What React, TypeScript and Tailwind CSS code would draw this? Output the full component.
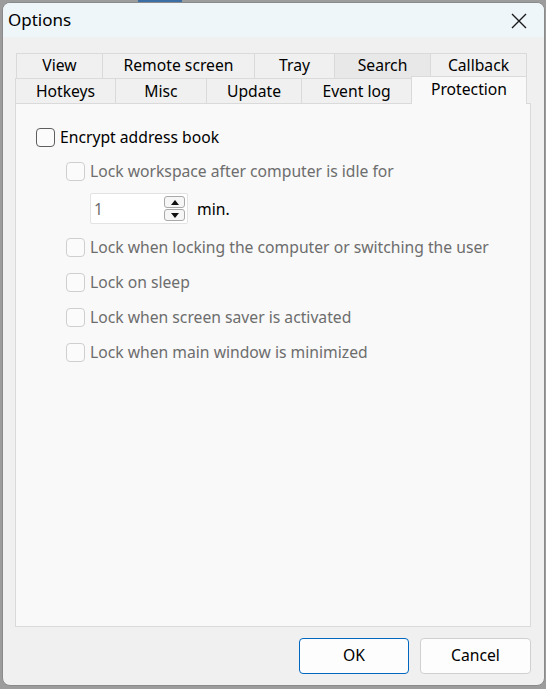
const font = { fontFamily: '"Noto Sans", "Open Sans", sans-serif' };

function Box({ dim }: { dim?: boolean }) {
  return (
    <span
      className={
        'inline-block w-[19px] h-[19px] rounded-[4px] border shrink-0 bg-[#fbfbfb] ' +
        (dim ? 'border-[#cfcfcf]' : 'border-[#5e5e5e]')
      }
    />
  );
}

export default function App() {
  const backTabs = [
    { label: 'View', w: 'w-[86px]' },
    { label: 'Remote screen', w: 'w-[152px]' },
    { label: 'Tray', w: 'w-[80px]' },
    { label: 'Search', w: 'w-[96px]', hover: true },
    { label: 'Callback', w: 'w-[97px]' },
  ];
  const frontTabs = [
    { label: 'Hotkeys', w: 'w-[100px]' },
    { label: 'Misc', w: 'w-[91px]' },
    { label: 'Update', w: 'w-[95px]' },
    { label: 'Event log', w: 'w-[110px]' },
  ];
  const locks = [
    'Lock when locking the computer or switching the user',
    'Lock on sleep',
    'Lock when screen saver is activated',
    'Lock when main window is minimized',
  ];

  return (
    <div className="w-[546px] h-[689px] bg-[#9c9c9c] relative overflow-hidden" style={font}>
      <div className="absolute left-[138px] top-0 w-[44px] h-[2px] bg-[#3a6ea5]" />
      <div className="absolute left-[2px] top-[2px] w-[543px] h-[684px] rounded-[8px] border border-[#8a8a8a] bg-[#f0f0f0] flex flex-col overflow-hidden">
        {/* title bar */}
        <div className="h-[34px] bg-[#eef6f9] flex items-center justify-between pl-[5px] pr-[17px] shrink-0">
          <span className="text-[17px] text-black">Options</span>
          <svg width="16" height="16" viewBox="0 0 16 16" className="mt-[1px]">
            <path d="M1 1 L15 15 M15 1 L1 15" stroke="#1a1a1a" strokeWidth="1.4" fill="none" />
          </svg>
        </div>

        <div className="flex-1 flex flex-col pl-[12px] pr-[13px] pt-[16px]">
          {/* tabs */}
          <div className="flex flex-col text-[15.7px] text-black">
            <div className="flex h-[25px] pl-[1px]">
              {backTabs.map((t) => (
                <div
                  key={t.label}
                  className={
                    t.w +
                    ' border border-b-0 border-r-0 last:border-r border-[#dadada] flex items-center justify-center ' +
                    (t.hover ? 'bg-[#e8e8e8]' : 'bg-[#f0f0f0]')
                  }
                >
                  {t.label}
                </div>
              ))}
            </div>
            <div className="flex h-[26px] items-end">
              {frontTabs.map((t) => (
                <div
                  key={t.label}
                  className={t.w + ' h-[26px] border border-b-0 border-r-0 border-[#dadada] bg-[#f0f0f0] flex items-center justify-center'}
                >
                  {t.label}
                </div>
              ))}
              <div className="w-[116px] h-[28px] -mt-[2px] border border-b-0 border-[#dadada] bg-[#f9f9f9] flex items-start justify-center pt-[1px] relative z-10">
                Protection
              </div>
            </div>
          </div>

          {/* panel */}
          <div className="h-[524px] -mt-[1px] border border-[#dadada] bg-[#f9f9f9] pl-[20px] pt-[23px] text-[15.7px] leading-[20px]">
            <label className="flex items-center gap-[5px] text-black">
              <Box />
              <span>Encrypt address book</span>
            </label>
            <div className="pl-[30px] text-[#6d6d6d]">
              <div className="flex items-center gap-[5px] mt-[14px]">
                <Box dim />
                <span>Lock workspace after computer is idle for</span>
              </div>
              <div className="flex items-center mt-[12px] pl-[24px]">
                <div className="w-[98px] h-[31px] border border-[#e3e3e3] bg-white rounded-[2px] flex items-center justify-between pl-[3px] pr-[2px]">
                  <span className="text-[#6d6d6d]">1</span>
                  <div className="flex flex-col gap-[1px]">
                    <div className="w-[21px] h-[12px] border border-[#a9a9a9] rounded-[3px] bg-[#f6f6f6] flex items-center justify-center">
                      <svg width="8" height="5" viewBox="0 0 8 5"><path d="M0 5 L4 0 L8 5Z" fill="#111" /></svg>
                    </div>
                    <div className="w-[21px] h-[12px] border border-[#a9a9a9] rounded-[3px] bg-[#f6f6f6] flex items-center justify-center">
                      <svg width="8" height="5" viewBox="0 0 8 5"><path d="M0 0 L4 5 L8 0Z" fill="#111" /></svg>
                    </div>
                  </div>
                </div>
                <span className="ml-[9px] text-black">min.</span>
              </div>
              {locks.map((l, i) => (
                <div key={l} className={'flex items-center gap-[5px] ' + (i === 0 ? 'mt-[13px]' : 'mt-[15px]')}>
                  <Box dim />
                  <span>{l}</span>
                </div>
              ))}
            </div>
          </div>

          {/* buttons */}
          <div className="flex justify-end gap-[11px] mt-[11px] text-[15.7px] text-black">
            <button className="w-[110px] h-[36px] rounded-[4px] border border-[#0067c0] bg-[#fdfdfd]">OK</button>
            <button className="w-[111px] h-[36px] rounded-[4px] border border-[#d0d0d0] bg-[#fdfdfd]">Cancel</button>
          </div>
        </div>
      </div>
    </div>
  );
}
